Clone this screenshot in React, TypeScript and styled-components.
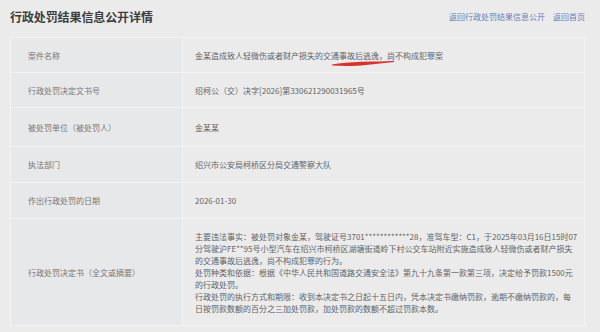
import React from "react";
import styled, { createGlobalStyle } from "styled-components";

const GlobalStyle = createGlobalStyle`
  html, body {
    margin: 0;
    padding: 0;
    background: #ebebeb;
  }
  body {
    font-family: "Noto Sans CJK SC", "Noto Sans", sans-serif;
  }
`;

interface Row {
  label: string;
  value?: React.ReactNode;
  height?: number;
}

const summaryLines = [
  "主要违法事实：被处罚对象金某，驾驶证号3701************28，准驾车型：C1，于2025年03月16日15时07",
  "分驾驶沪FE**95号小型汽车在绍兴市柯桥区湖塘街道岭下村公交车站附近实施造成致人轻微伤或者财产损失",
  "的交通事故后逃逸，尚不构成犯罪的行为。",
  "处罚种类和依据：根据《中华人民共和国道路交通安全法》第九十九条第一款第三项，决定给予罚款1500元",
  "的行政处罚。",
  "行政处罚的执行方式和期限：收到本决定书之日起十五日内，凭本决定书缴纳罚款，逾期不缴纳罚款的，每",
  "日按罚款数额的百分之三加处罚款，加处罚款的数额不超过罚款本数。",
];

// hand-drawn red pen mark under part of the case name
const Marked: React.FC<{ children: React.ReactNode }> = ({ children }) => (
  <MarkWrap>
    {children}
    <PenStroke viewBox="0 0 62 8" width={62} height={8}>
      <path
        d="M0 5.4 C 8 4.2, 18 3.0, 30 2.7 C 42 2.5, 52 2.6, 62 1.8 L 62 2.9 C 52 4.0, 44 4.7, 34 5.9 C 24 7.0, 12 7.2, 0 6.4 Z"
        fill="#d8332b"
      />
    </PenStroke>
  </MarkWrap>
);

const rows: Row[] = [
  {
    label: "案件名称",
    height: 35,
    value: (
      <>
        金某造成致人轻微伤或者财产损失的
        <Marked>交通事故后逃逸</Marked>
        ，尚不构成犯罪案
      </>
    ),
  },
  { label: "行政处罚决定文书号", height: 35, value: "绍柯公（交）决字[2026]第330621290031965号" },
  { label: "被处罚单位（被处罚人）", height: 39, value: "金某某" },
  { label: "执法部门", height: 36, value: "绍兴市公安局柯桥区分局交通警察大队" },
  { label: "作出行政处罚的日期", height: 36, value: "2026-01-30" },
];

export default function App() {
  return (
    <>
      <GlobalStyle />
      <Page>
        <Header>
          <Title>行政处罚结果信息公开详情</Title>
          <Links>
            <LinkText>返回行政处罚结果信息公开</LinkText>
            <LinkText>返回首页</LinkText>
          </Links>
        </Header>
        <Table>
          {rows.map((r) => (
            <TableRow key={r.label} $h={r.height}>
              <LabelCell>{r.label}</LabelCell>
              <ValueCell>{r.value}</ValueCell>
            </TableRow>
          ))}
          <TableRow>
            <LabelCell>行政处罚决定书（全文或摘要）</LabelCell>
            <LongCell>
              {summaryLines.map((line, i) => (
                <Line key={i}>{line}</Line>
              ))}
            </LongCell>
          </TableRow>
        </Table>
      </Page>
    </>
  );
}

const Page = styled.div`
  width: 600px;
  height: 332px;
  box-sizing: border-box;
  padding: 0 15px 0 10px;
  overflow: hidden;
`;

const Header = styled.div`
  height: 37px;
  display: flex;
  align-items: center;
  justify-content: space-between;
  padding-bottom: 5px;
  box-sizing: border-box;
`;

const Title = styled.h1`
  margin: 0;
  font-size: 12px;
  font-weight: 700;
  color: #3d3d3d;
  letter-spacing: -0.1px;
`;

const Links = styled.div`
  display: flex;
  gap: 8px;
`;

const LinkText = styled.span`
  font-size: 8px;
  color: #6a7fb5;
`;

const Table = styled.div`
  border: 1px solid #f3f3f3;
  border-bottom: none;
  display: flex;
  flex-direction: column;
`;

const TableRow = styled.div<{ $h?: number }>`
  display: grid;
  grid-template-columns: 172px 1fr;
  min-height: ${(p) => (p.$h ? `${p.$h}px` : "auto")};
  border-bottom: 1px solid #f3f3f3;
  box-sizing: border-box;
`;

const LabelCell = styled.div`
  background: #e7e8e9;
  border-right: 1px solid #f1f1f1;
  display: flex;
  align-items: center;
  padding-left: 17px;
  font-size: 8px;
  color: #777777;
`;

const ValueCell = styled.div`
  background: #ebebeb;
  display: flex;
  align-items: center;
  padding-left: 12px;
  font-size: 8px;
  color: #636363;
  white-space: nowrap;
`;

const LongCell = styled.div`
  background: #ebebeb;
  padding: 12px 0 10px 12px;
  font-size: 8px;
  line-height: 12px;
  color: #636363;
`;

const Line = styled.div`
  white-space: nowrap;
`;

const MarkWrap = styled.span`
  position: relative;
  display: inline-block;
`;

const PenStroke = styled.svg`
  position: absolute;
  left: 9px;
  top: 9px;
  overflow: visible;
`;
